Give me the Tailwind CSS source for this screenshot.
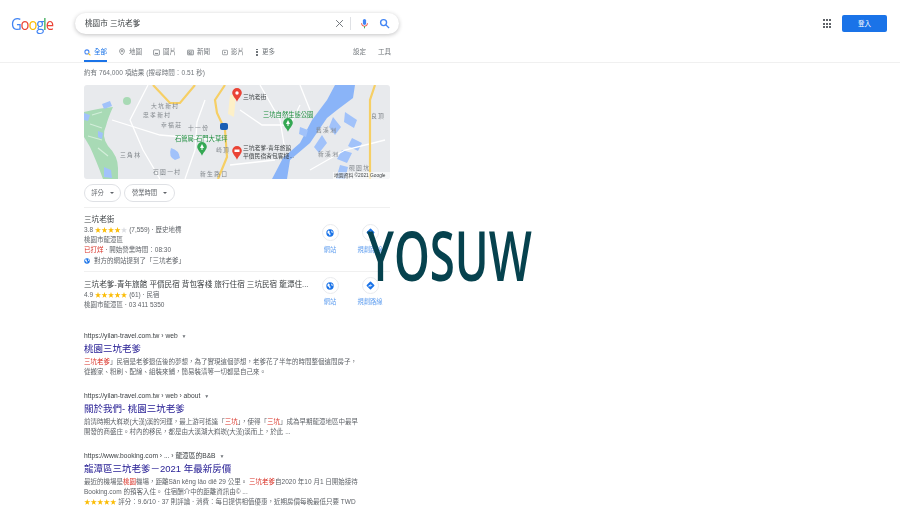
<!DOCTYPE html>
<html lang="zh-Hant">
<head>
    <meta charset="UTF-8">
    <title>桃園市 三坑老爹 - Google 搜尋</title>
    <script src="https://cdn.jsdelivr.net/npm/@tailwindcss/browser@4"></script>
</head>
<body class="bg-white w-[900px] h-[506px] overflow-hidden relative font-['Liberation_Sans','Noto_Sans_CJK_TC',sans-serif] text-[#5f6368]">
<div class="blur-[0.35px]">

    <!-- top bar -->
    <header class="h-[47px] pt-[13px] flex items-start">
        <div class="w-[75px] pl-[11px] text-[17px] leading-[21px] tracking-[-1.300px] font-['Open_Sans',sans-serif]">
            <div class="origin-left scale-x-[0.87]"><span class="text-[#4285f4]">G</span><span class="text-[#ea4335]">o</span><span class="text-[#fbbc05]">o</span><span class="text-[#4285f4]">g</span><span class="text-[#34a853]">l</span><span class="text-[#ea4335]">e</span></div>
        </div>
        <div class="w-[324px] h-[21px] rounded-full bg-white shadow-[0_1px_4px_rgba(32,33,36,0.28)] flex items-center pl-[10px] pr-[9px] text-[7.600px] text-[#3c4043]">
            <span class="flex-1">桃園市 三坑老爹</span>
            <svg class="w-[9px] h-[9px] mr-[6px]" viewBox="0 0 24 24" fill="none" stroke="#70757a" stroke-width="2.600"><path d="M3 3l18 18M21 3L3 21"/></svg>
            <span class="w-px h-[13px] bg-[#dfe1e5] mr-[8px]"></span>
            <svg class="w-[11px] h-[11px] mr-[9px]" viewBox="0 0 24 24"><rect x="8.500" y="2" width="7" height="13" rx="3.500" fill="#4285f4"/><path d="M5.500 11.500a6.500 6.500 0 0 0 13 0" fill="none" stroke="#ea4335" stroke-width="2"/><rect x="11" y="18" width="2" height="4.500" fill="#34a853"/></svg>
            <svg class="w-[11px] h-[11px]" viewBox="0 0 24 24" fill="none" stroke="#4285f4" stroke-width="3"><circle cx="10" cy="10" r="6.500"/><path d="M15 15l7 7"/></svg>
        </div>
        <div class="ml-auto flex items-center h-[21px]">
            <div class="grid grid-cols-3 gap-[1.500px] w-[8px] mr-[11px]">
                <i class="w-[2px] h-[2px] bg-[#5f6368]"></i><i class="w-[2px] h-[2px] bg-[#5f6368]"></i><i class="w-[2px] h-[2px] bg-[#5f6368]"></i>
                <i class="w-[2px] h-[2px] bg-[#5f6368]"></i><i class="w-[2px] h-[2px] bg-[#5f6368]"></i><i class="w-[2px] h-[2px] bg-[#5f6368]"></i>
                <i class="w-[2px] h-[2px] bg-[#5f6368]"></i><i class="w-[2px] h-[2px] bg-[#5f6368]"></i><i class="w-[2px] h-[2px] bg-[#5f6368]"></i>
            </div>
            <div class="w-[45px] h-[17px] mr-[13px] rounded-[2px] bg-[#1a73e8] text-white text-[6.500px] flex items-center justify-center">登入</div>
        </div>
    </header>

    <!-- tabs -->
    <nav class="h-[15px] border-b border-[#f0f0f0] box-content pl-[84px] flex text-[6.500px] leading-[10px] text-[#70757a]">
        <div class="h-[15px] w-[23px] border-b-2 border-[#1a73e8] text-[#1a73e8] flex items-start gap-[3px]">
            <svg class="w-[7px] h-[7px] mt-[1.500px]" viewBox="0 0 24 24" fill="none" stroke-width="3.500"><circle cx="10" cy="10" r="7" stroke="#4285f4"/><path d="M15 15l7 7" stroke="#fbbc05"/></svg>全部
        </div>
        <div class="ml-[12px] flex gap-[4px]"><svg class="w-[6px] h-[8px] mt-[1px]" viewBox="0 0 20 24" fill="none" stroke="#70757a" stroke-width="2.500"><path d="M10 22S2 14 2 9a8 8 0 0 1 16 0c0 5-8 13-8 13z"/><circle cx="10" cy="9" r="2.500"/></svg>地圖</div>
        <div class="ml-[11px] flex gap-[3px]"><svg class="w-[7px] h-[7px] mt-[1.500px]" viewBox="0 0 24 24" fill="none" stroke="#70757a" stroke-width="2.500"><rect x="2" y="3" width="20" height="18" rx="2"/><path d="M6 17l4-5 3 3 2-2 3 4z" fill="#70757a" stroke="none"/></svg>圖片</div>
        <div class="ml-[11px] flex gap-[3px]"><svg class="w-[7px] h-[7px] mt-[1.500px]" viewBox="0 0 24 24" fill="none" stroke="#70757a" stroke-width="2.500"><rect x="2" y="4" width="20" height="16" rx="1"/><path d="M6 9h5v6H6zM14 9h4M14 13h4M6 17h12"/></svg>新聞</div>
        <div class="ml-[12px] flex gap-[3px]"><svg class="w-[6px] h-[7px] mt-[1.500px]" viewBox="0 0 24 24" fill="none" stroke="#70757a" stroke-width="2.500"><rect x="2" y="3" width="20" height="18" rx="2"/><path d="M9 8l7 4-7 4z" fill="#70757a" stroke="none"/></svg>影片</div>
        <div class="ml-[12px] flex gap-[4px]"><span class="w-[2px] h-[7px] mt-[1.500px] flex flex-col justify-between"><i class="w-[1.500px] h-[1.500px] bg-[#70757a]"></i><i class="w-[1.500px] h-[1.500px] bg-[#70757a]"></i><i class="w-[1.500px] h-[1.500px] bg-[#70757a]"></i></span>更多</div>
        <div class="ml-[78px]">設定</div>
        <div class="ml-[12px]">工具</div>
    </nav>

    <main class="pl-[84px] w-[390px]">
        <p class="h-[22px] pt-[5px] text-[6.600px] leading-[10px] text-[#70757a] whitespace-nowrap">約有 764,000 項結果 (搜尋時間：0.51 秒)</p>

        <!-- map -->
        <div class="relative w-[306px] h-[94px] rounded-[3px] overflow-hidden bg-[#e8eaed]">
            <svg class="block w-[306px] h-[94px]" viewBox="84 85 306 94" font-family="Liberation Sans, Noto Sans CJK TC, sans-serif">
                <path d="M84 112Q100 108 113 107Q108 118 106 126Q101 136 108 146Q118 156 118 168V179H103Q96 160 90 147Q86 140 84 137Z" fill="#a8dab5"/>
                <path d="M92 115l10-3M90 124l12 4M88 136l14 4M98 148l10 8" fill="none" stroke="#d2eed9" stroke-width="1.200"/>
                <path d="M335 85H355L353 98L337 110L327 118L310 143L290 160L287 179H272L283 158L300 143L312 120L327 100Z" fill="#8ab4f8"/>
                <path d="M345 112l12 8-3 8-10-6zM333 117l8 10-6 8-6-8zM352 138l10 5-4 8-10-5zM342 150l10 3-5 10-10-4zM322 135l-8 12 5 6 8-10zM340 165l8 2-3 12h-9z" fill="#a1c2fa"/>
                <path d="M102 104l8-3 2 5-8 3zM84 113l6 2-2 6-4-1zM104 167l7 3 1 8-8-1zM171 148q8 2 9 10l-5 2q-7-3-4-12zM300 127l8 3-2 7-7-3zM98 131l5 2-1 6-4-2z" fill="#a1c2fa"/>
                <circle cx="127" cy="101" r="4" fill="#a8dab5"/>
                <path d="M230 95l6 0-2 22-6-3z" fill="#fdf0c8"/>
                <g fill="none" stroke="#ffffff" stroke-width="1.300">
                    <path d="M148 85L130 120L143 150L160 179"/>
                    <path d="M205 100L197 122L195 150L185 179"/>
                    <path d="M240 110L262 125L290 125L300 105"/>
                    <path d="M112 120L160 135L218 140"/>
                    <path d="M230 165L275 160"/>
                    <path d="M260 85L280 120L285 150"/>
                    <path d="M300 85L310 110"/>
                    <path d="M310 170L345 150L385 140"/>
                </g>
                <g fill="none" stroke="#f6cf65" stroke-width="2.200">
                    <path d="M153 85L170 103H180L195 85"/>
                    <path d="M225 85L215 100L217 113L225 130L227 157L218 179"/>
                    <path d="M375 85L370 100V179"/>
                </g>
                <rect x="220" y="123" width="8" height="7" rx="2" fill="#1a5fb4"/>
                <g font-size="5.800" fill="#80868b" letter-spacing="1.300">
                    <text x="151" y="108">大坑新村</text>
                    <text x="143" y="117">忠孝新村</text>
                    <text x="161" y="127">幸福莊</text>
                    <text x="188" y="130">十一份</text>
                    <text x="120" y="157">三角林</text>
                    <text x="153" y="174">石園一村</text>
                    <text x="200" y="176">新生路口</text>
                    <text x="216" y="152">崎頂</text>
                    <text x="316" y="132">舊溪洲</text>
                    <text x="318" y="156">新溪洲</text>
                    <text x="349" y="170">硯園坑</text>
                    <text x="371" y="118">良頂</text>
                </g>
                <g font-size="6.300" fill="#1e8e3e">
                    <text x="263" y="117">三坑自然生態公園</text>
                    <text x="175" y="141">石管局-石門大草坪</text>
                </g>
                <g font-size="5.800" fill="#3c4043">
                    <text x="243" y="99">三坑老街</text>
                    <text x="243" y="150">三坑老爹-青年旅館</text>
                    <text x="243" y="158">平價民宿背包客棧...</text>
                </g>
                <path d="M237 88a4.800 4.800 0 0 1 4.800 4.800c0 3-3.200 5-4.800 9c-1.600-4-4.800-6-4.800-9A4.800 4.800 0 0 1 237 88z" fill="#ea4335"/>
                <circle cx="237" cy="93" r="1.700" fill="#ffffff"/>
                <path d="M237 146a4.800 4.800 0 0 1 4.800 4.800c0 3-3.200 5-4.800 9c-1.600-4-4.800-6-4.800-9a4.800 4.800 0 0 1 4.800-4.800z" fill="#ea4335"/>
                <rect x="234.500" y="149.500" width="5" height="2.500" fill="#ffffff"/>
                <path d="M288 118a4.800 4.800 0 0 1 4.800 4.800c0 3-3.200 5-4.800 9c-1.600-4-4.800-6-4.800-9a4.800 4.800 0 0 1 4.800-4.800z" fill="#34a853"/>
                <path d="M288 120l2 4h-1.500v2h-1v-2H286z" fill="#ffffff"/>
                <path d="M202 142a4.800 4.800 0 0 1 4.800 4.800c0 3-3.200 5-4.800 9c-1.600-4-4.800-6-4.800-9a4.800 4.800 0 0 1 4.800-4.800z" fill="#34a853"/>
                <path d="M202 144l2 4h-1.500v2h-1v-2H200z" fill="#ffffff"/>
                <rect x="333" y="172" width="57" height="7" fill="#ffffff" fill-opacity="0.6"/>
                <text x="334" y="177" font-size="4.800" fill="#3c4043">地圖資料 ©2021 Google</text>
            </svg>
        </div>

        <!-- filter chips -->
        <div class="flex gap-[3px] mt-[5px] h-[18px] text-[6.300px] text-[#5f6368]">
            <div class="w-[37px] rounded-full border border-[#dfe1e5] flex items-center justify-center gap-[6px]">評分<i class="border-x-[2px] border-t-[2.500px] border-x-transparent border-t-[#5f6368]"></i></div>
            <div class="w-[51px] rounded-full border border-[#dfe1e5] flex items-center justify-center gap-[6px]">營業時間<i class="border-x-[2px] border-t-[2.500px] border-x-transparent border-t-[#5f6368]"></i></div>
        </div>

        <!-- local results -->
        <div class="mt-[5px] border-t border-[#f0f0f0] pt-[6px] h-[57px] box-content flex text-[6.500px] leading-[10.200px]">
            <div class="w-[233px]">
                <p class="text-[7.600px] leading-[11px] text-[#3c4043]">三坑老街</p>
                <p>3.8 <span class="text-[#fbbc04]">★★★★<span class="text-[#dadce0]">★</span></span> (7,559) · 歷史地標</p>
                <p>桃園市龍潭區</p>
                <p><span class="text-[#d93025]">已打烊</span> · 開始營業時間：08:30</p>
                <p class="flex items-center gap-[4px]"><svg class="w-[6px] h-[6px]" viewBox="0 0 12 12"><circle cx="6" cy="6" r="5.500" fill="#1a73e8"/><path d="M3 2l3 2-1 2 2 1-1 3-2-3-2-1zM8 2l2 2v2L8 5z" fill="#ffffff"/></svg>對方的網站提到了「三坑老爹」</p>
            </div>
            <div class="flex h-fit pt-[10px]">
                <div class="w-[40px] -ml-[6px] flex flex-col items-center gap-[4px] text-[6.300px] text-[#1a73e8]/70"><span class="w-[17px] h-[17px] rounded-full border border-[#e8eaed] flex items-center justify-center"><svg class="w-[8px] h-[8px]" viewBox="0 0 12 12"><circle cx="6" cy="6" r="5.500" fill="#1a73e8"/><path d="M3 2l3 2-1 2 2 1-1 3-2-3-2-1zM8 2l2 2v2L8 5z" fill="#ffffff"/></svg></span>網站</div>
                <div class="w-[40px] flex flex-col items-center gap-[4px] text-[6.300px] text-[#1a73e8]/70"><span class="w-[17px] h-[17px] rounded-full border border-[#e8eaed] flex items-center justify-center"><svg class="w-[9px] h-[9px]" viewBox="0 0 12 12"><rect x="2" y="2" width="8" height="8" rx="1" transform="rotate(45 6 6)" fill="#1a73e8"/><path d="M4 8V6h3M6 4.500L7.500 6 6 7.500" fill="none" stroke="#ffffff"/></svg></span>規劃路線</div>
            </div>
        </div>
        <div class="border-t border-[#f0f0f0] pt-[7px] h-[46px] flex text-[6.500px] leading-[10.200px]">
            <div class="w-[233px]">
                <p class="text-[7.600px] leading-[11px] text-[#3c4043] whitespace-nowrap">三坑老爹-青年旅館 平價民宿 背包客棧 旅行住宿 三坑民宿 龍潭住...</p>
                <p>4.9 <span class="text-[#fbbc04]">★★★★★</span> (61) · 民宿</p>
                <p>桃園市龍潭區 · 03 411 5350</p>
            </div>
            <div class="flex h-fit -mt-[2px]">
                <div class="w-[40px] -ml-[6px] flex flex-col items-center gap-[3px] text-[6.300px] text-[#1a73e8]/70"><span class="w-[17px] h-[17px] rounded-full border border-[#e8eaed] flex items-center justify-center"><svg class="w-[8px] h-[8px]" viewBox="0 0 12 12"><circle cx="6" cy="6" r="5.500" fill="#1a73e8"/><path d="M3 2l3 2-1 2 2 1-1 3-2-3-2-1zM8 2l2 2v2L8 5z" fill="#ffffff"/></svg></span>網站</div>
                <div class="w-[40px] flex flex-col items-center gap-[3px] text-[6.300px] text-[#1a73e8]/70"><span class="w-[17px] h-[17px] rounded-full border border-[#e8eaed] flex items-center justify-center"><svg class="w-[9px] h-[9px]" viewBox="0 0 12 12"><rect x="2" y="2" width="8" height="8" rx="1" transform="rotate(45 6 6)" fill="#1a73e8"/><path d="M4 8V6h3M6 4.500L7.500 6 6 7.500" fill="none" stroke="#ffffff"/></svg></span>規劃路線</div>
            </div>
        </div>

        <!-- organic results -->
        <section class="mt-[14px] h-[60px]">
            <p class="text-[6.700px] leading-[10px] text-[#3c4043]">https://yilan-travel.com.tw › web <span class="text-[#70757a] text-[5px] ml-[2px]">▼</span></p>
            <h3 class="text-[9.500px] leading-[15px] text-[#2a2296]">桃園三坑老爹</h3>
            <p class="text-[6.500px] leading-[10px] mt-[1px] whitespace-nowrap"><span class="text-[#d93025]">三坑老爹</span>」民宿是老爹退伍後的夢想，為了實現這個夢想，老爹花了半年的時間整個這間房子，<br>從搬家、粉刷、配線、組裝來鋪，簡易裝潢等一切都是自己來。</p>
        </section>
        <section class="h-[60px]">
            <p class="text-[6.700px] leading-[10px] text-[#3c4043]">https://yilan-travel.com.tw › web › about <span class="text-[#70757a] text-[5px] ml-[2px]">▼</span></p>
            <h3 class="text-[9.500px] leading-[15px] text-[#2a2296]">關於我們- 桃園三坑老爹</h3>
            <p class="text-[6.500px] leading-[10px] mt-[1px] whitespace-nowrap">前清時期大嵙崁(大漢)溪的河運，最上游可抵達「<span class="text-[#d93025]">三坑</span>」，使得「<span class="text-[#d93025]">三坑</span>」成為早期龍潭地區中最早<br>開發的商盛庄。村內的移民，都是由大溪湖大嵙崁(大漢)溪而上，於此 ...</p>
        </section>
        <section>
            <p class="text-[6.700px] leading-[10px] text-[#3c4043]">https://www.booking.com › ... › 龍潭區的B&amp;B <span class="text-[#70757a] text-[5px] ml-[2px]">▼</span></p>
            <h3 class="text-[9.500px] leading-[15px] text-[#2a2296] whitespace-nowrap">龍潭區三坑老爹－2021 年最新房價</h3>
            <p class="text-[6.500px] leading-[10px] mt-[1px] whitespace-nowrap">最近的機場是<span class="text-[#d93025]">桃園</span>機場，距離Sān kēng lǎo diē 29 公里。 <span class="text-[#d93025]">三坑老爹</span>自2020 年10 月1 日開始接待<br>Booking.com 的預客入住。 住宿酬介中的距離資訊由© ...<br><span class="text-[#fbbc04]">★★★★★</span> 評分：9.6/10 · 37 則評論 · 消費：每日提供相值優惠，近期房價每晚最低只要 TWD</p>
        </section>
    </main>
</div>

    <!-- watermark over the page -->
    <div class="absolute left-[367px] top-[222px] origin-left scale-x-[0.67] text-[68px] leading-[66px] font-semibold text-[#06424e] font-['Open_Sans',sans-serif] whitespace-nowrap">YOSUW</div>
</body>
</html>
